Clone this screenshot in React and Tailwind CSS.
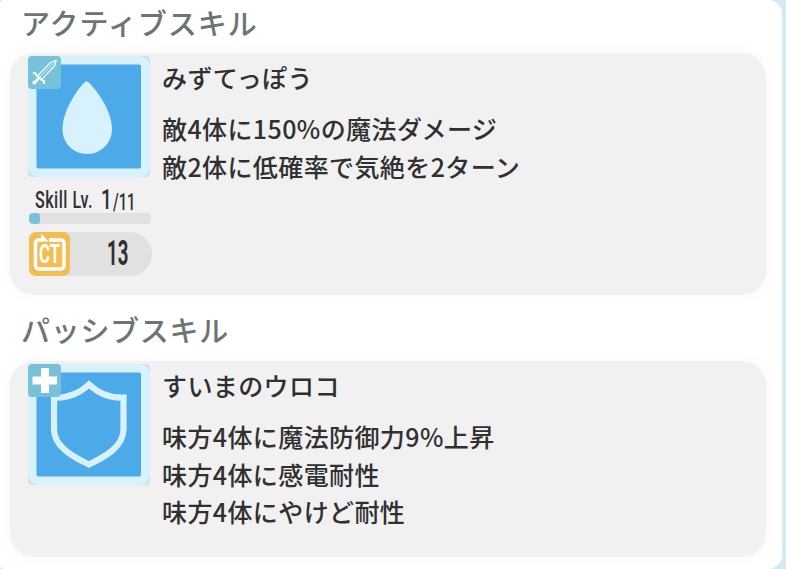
const jp = "font-['Noto_Sans_CJK_JP','Noto_Sans',sans-serif] font-medium";

function SwordIcon() {
  return (
    <svg viewBox="0 0 33 33" className="block size-[33px]" fill="none" stroke="#f4fbfd" strokeLinecap="round" strokeLinejoin="round">
      <path d="M9.5 20 L22.5 6.5 L28.3 4.3 L26.5 10 L14 23.2" strokeWidth="1.2" />
      <path d="M12 21 L26.5 6" strokeWidth="0.8" />
      <path d="M5.8 16.8 Q7.500 16.8 8.2 19 L14.5 24.5 Q16.500 24.5 16 27" strokeWidth="2.2" />
      <path d="M10 23 L6.6 26.4" strokeWidth="2.8" />
      <circle cx="6.4" cy="26.6" r="2" fill="#f4fbfd" stroke="none" />
    </svg>
  );
}

function PlusIcon() {
  return (
    <svg viewBox="0 0 33 33" className="block size-[33px]">
      <path d="M13 4h8v8.5h8v8h-8V29h-8v-8.5H4.5v-8H13z" fill="#fff" />
    </svg>
  );
}

function SkillTile({ badge, children }) {
  return (
    <div className="relative h-[121px] w-[122px]">
      <svg viewBox="0 0 122 121" className="block h-[121px] w-[122px]">
        <rect width="122" height="121" rx="4" fill="#c9e5ef" />
        <rect width="122" height="121" rx="11" fill="#d7f1fd" />
        <rect x="8.5" y="8.5" width="104.5" height="104" rx="2" fill="#4daae9" />
        {children}
      </svg>
      <div className="absolute left-0 top-0 size-[33px] rounded-[4px] bg-[#77c2d9]">{badge}</div>
    </div>
  );
}

function Level() {
  return (
    <div className="ml-px mt-[8px] w-[123px] font-['Roboto',sans-serif] text-[#303030]">
      <div className="flex h-[28px] items-start pl-[6px] whitespace-nowrap">
        <div className="h-[28px] w-[66px]">
          <span className="block w-max origin-left scale-x-[0.7] text-[23px] leading-[32px] font-medium tracking-[0.7px]">Skill Lv.</span>
        </div>
        <div className="h-[28px] w-[12px]">
          <span className="block w-max origin-left scale-x-[0.68] text-[28px] leading-[30px] font-medium">1</span>
        </div>
        <div className="h-[28px]">
          <span className="block w-max origin-left scale-x-[0.64] text-[23px] leading-[35px] font-medium">/11</span>
        </div>
      </div>
      <div className="h-[11px] w-[122px] overflow-hidden rounded-[4px] bg-[#e1e1e1]">
        <div className="h-full w-[11px] rounded-[3px] bg-[#77c2d9]" />
      </div>
      <div className="mt-[8px] flex h-[44px] w-[123px] rounded-l-[8px] rounded-r-[22px] bg-[#e1e1e1]">
        <svg viewBox="0 0 41 44" className="h-[44px] w-[41px]">
          <rect width="41" height="44" rx="7" fill="#f2be54" />
          <path d="M20 8h12a3 3 0 0 1 3 3v23a3 3 0 0 1-3 3H9.500a3 3 0 0 1-3-3V11a3 3 0 0 1 3-3h4" fill="none" stroke="#fff" strokeWidth="3.4" />
          <path d="M12 1.500L19.500 9.500H12z" fill="#fff" />
          <text x="10" y="31" textLength="21" lengthAdjust="spacingAndGlyphs" fill="#fff" fontFamily="Roboto, sans-serif" fontWeight="700" fontSize="25">CT</text>
        </svg>
        <div className="pl-[37px]">
          <span className="block w-max origin-left scale-x-[0.53] text-[35px] leading-[43px] font-bold">13</span>
        </div>
      </div>
    </div>
  );
}

function Skill({ tile, level, name, lines, height }) {
  return (
    <section className={`${height} flex w-[756px] rounded-[24px] bg-[#f1f1f1] pl-[18px] pt-[3px] shadow-[0_0_16px_rgba(0,0,0,0.035)]`}>
      <div className="w-[134px] shrink-0">
        {tile}
        {level}
      </div>
      <div className={`${jp} text-[25px] tracking-[0.4px] whitespace-nowrap text-[#303030]`}>
        <h3 className="h-[54px] leading-[43px]">{name}</h3>
        {lines.map((line) => (
          <p key={line} className="h-[37.500px] leading-[37px]">{line}</p>
        ))}
      </div>
    </section>
  );
}

export default function App() {
  const heading = `${jp} pl-[11px] text-[29px] text-[#6d7475]`;
  return (
    <div className="h-[569px] w-[786px] overflow-hidden bg-[#d4e9f1]">
      <main className="h-[569px] w-[782px] rounded-l-[4px] rounded-r-[14px] bg-white pl-[10px]">
        <h2 className={`${heading} h-[53px] leading-[45px] tracking-[1px]`}>アクティブスキル</h2>
        <Skill
          height="h-[242px]"
          name="みずてっぽう"
          lines={["敵4体に150%の魔法ダメージ", "敵2体に低確率で気絶を2ターン"]}
          level={<Level />}
          tile={
            <SkillTile badge={<SwordIcon />}>
              <path d="M58.500 25C63 27 84 52 84 73c0 14-11 25-25 25S34.500 87 34.500 73C34.500 52 54 27 58.500 25z" fill="#d7f1fd" />
            </SkillTile>
          }
        />
        <h2 className={`${heading} h-[66px] pt-[12px] leading-[45px] tracking-[0.7px]`}>パッシブスキル</h2>
        <Skill
          height="h-[196px]"
          name="すいまのウロコ"
          lines={["味方4体に魔法防御力9%上昇", "味方4体に感電耐性", "味方4体にやけど耐性"]}
          tile={
            <SkillTile badge={<PlusIcon />}>
              <path d="M61 20.500Q76 34.500 95.500 33.500V65C95.500 82 79 92 61 100.500C43 92 26 82 26 65V33.500Q46 34.500 61 20.500z" fill="none" stroke="#d7f1fd" strokeWidth="6.2" />
            </SkillTile>
          }
        />
      </main>
    </div>
  );
}
